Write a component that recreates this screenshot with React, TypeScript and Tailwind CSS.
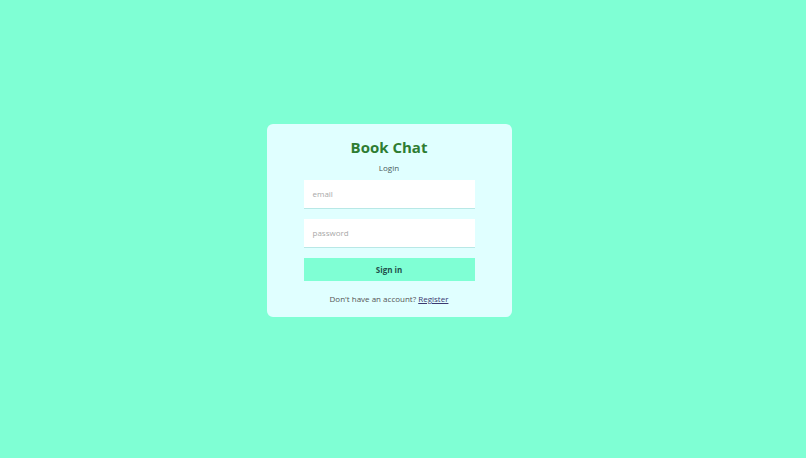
import React from "react";

export default function App() {
  return (
    <div
      className="w-full h-[458px] bg-[#7fffd4] flex items-center justify-center pr-[28px] pb-[17px]"
      style={{ fontFamily: '"Open Sans", sans-serif' }}
    >
      <div className="w-[245px] h-[193px] bg-[#e0ffff] rounded-[6px] flex flex-col items-center pt-[12px]">
        <h1 className="text-[15px] leading-[22px] font-bold text-[#2e7d32]">Book Chat</h1>
        <p className="text-[8px] leading-[12px] text-[#4a5a5a] mt-[4px]">Login</p>
        <div className="w-[171px] mt-[6px] flex flex-col">
          <div className="h-[29px] bg-white border-b border-[#b8e8e6] flex items-center px-[9px]">
            <span className="text-[8px] text-[#a8a8a8]">email</span>
          </div>
          <div className="h-[29px] mt-[10px] bg-white border-b border-[#b8e8e6] flex items-center px-[9px]">
            <span className="text-[8px] text-[#a8a8a8]">password</span>
          </div>
          <div className="h-[23px] mt-[10px] bg-[#7fffd4] flex items-center justify-center">
            <span className="text-[8px] font-bold text-[#1f4f4b]">Sign in</span>
          </div>
        </div>
        <p className="text-[8px] leading-[11px] text-[#555] mt-[12px]">
          Don't have an account? <span className="underline text-[#3b3970]">Register</span>
        </p>
      </div>
    </div>
  );
}
